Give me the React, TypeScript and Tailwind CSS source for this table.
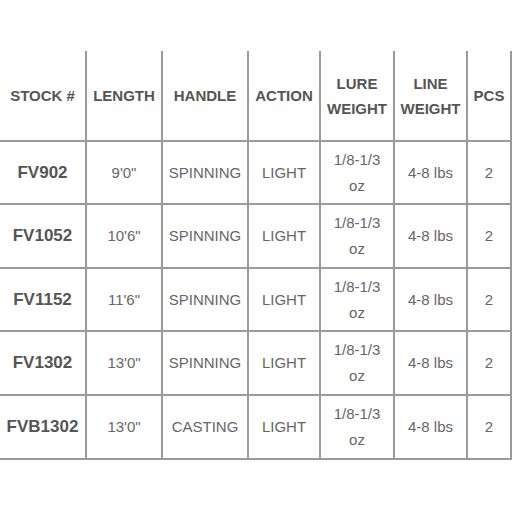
const columns = [
  { key: 'stock', label: ['STOCK #'], width: 'w-[87px]' },
  { key: 'length', label: ['LENGTH'], width: 'w-[76px]' },
  { key: 'handle', label: ['HANDLE'], width: 'w-[86px]' },
  { key: 'action', label: ['ACTION'], width: 'w-[72px]' },
  { key: 'lure', label: ['LURE', 'WEIGHT'], width: 'w-[74px]' },
  { key: 'line', label: ['LINE', 'WEIGHT'], width: 'w-[73px]' },
  { key: 'pcs', label: ['PCS'], width: 'w-[44px]' },
];

const rods = [
  { stock: 'FV902', length: '9\'0"', handle: 'SPINNING', height: 'h-[63px]' },
  { stock: 'FV1052', length: '10\'6"', handle: 'SPINNING', height: 'h-[64px]' },
  { stock: 'FV1152', length: '11\'6"', handle: 'SPINNING', height: 'h-[63px]' },
  { stock: 'FV1302', length: '13\'0"', handle: 'SPINNING', height: 'h-[64px]' },
  { stock: 'FVB1302', length: '13\'0"', handle: 'CASTING', height: 'h-[64px]' },
];

const cell = 'flex flex-col items-center justify-center border-r-2 border-[#9a9a9a] text-center';

export default function App() {
  return (
    <div className="h-[512px] w-[512px] overflow-hidden bg-white pt-[51px] font-['Liberation_Sans',Arial,sans-serif]">
      <div className="flex h-[91px] border-b-2 border-[#9a9a9a]">
        {columns.map((col) => (
          <div
            key={col.key}
            className={`${cell} ${col.width} text-[15px] font-bold leading-[25px] text-[#555]`}
          >
            {col.label.map((l) => (
              <span key={l}>{l}</span>
            ))}
          </div>
        ))}
      </div>
      {rods.map((rod) => (
        <div key={rod.stock} className={`flex ${rod.height} border-b-2 border-[#9a9a9a] text-[15px] leading-[26px] text-[#666]`}>
          <div className={`${cell} w-[87px] text-[17px] font-bold text-[#555]`}>{rod.stock}</div>
          <div className={`${cell} w-[76px]`}>{rod.length}</div>
          <div className={`${cell} w-[86px]`}>{rod.handle}</div>
          <div className={`${cell} w-[72px]`}>LIGHT</div>
          <div className={`${cell} w-[74px]`}>
            <span>1/8-1/3</span>
            <span>oz</span>
          </div>
          <div className={`${cell} w-[73px]`}>4-8 lbs</div>
          <div className={`${cell} w-[44px]`}>2</div>
        </div>
      ))}
    </div>
  );
}
